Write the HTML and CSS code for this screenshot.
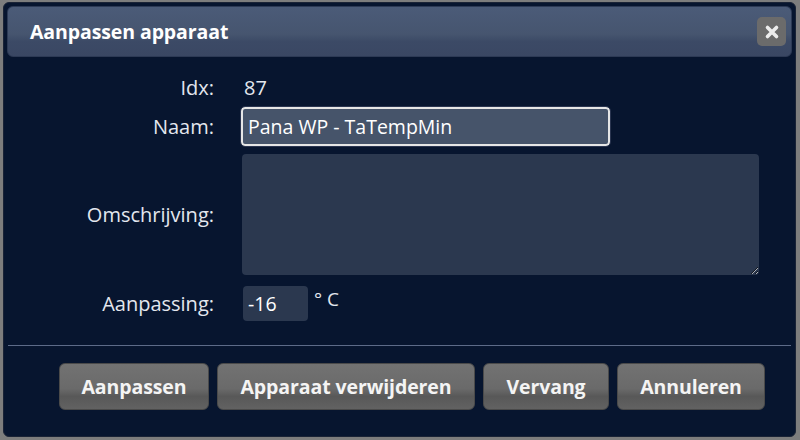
FILE: index.html
```html
<!DOCTYPE html>
<html lang="nl">
<head>
<meta charset="utf-8">
<title>Aanpassen apparaat</title>
<link rel="stylesheet" href="styles.css">
</head>
<body>
<div class="dialog">
  <div class="titlebar">
    <span class="title">Aanpassen apparaat</span>
    <button class="close" aria-label="Sluiten">
      <svg width="16" height="16" viewBox="0 0 16 16"><path d="M3.5 3.5 L12.5 12.5 M12.5 3.5 L3.5 12.5" stroke="#ececec" stroke-width="3.6" stroke-linecap="round"/></svg>
    </button>
  </div>
  <div class="content">
    <div class="form">
      <label class="lbl row-idx">Idx:</label>
      <div class="val row-idx">87</div>
      <label class="lbl">Naam:</label>
      <div class="val"><input class="name" type="text" value="Pana WP - TaTempMin"></div>
      <label class="lbl">Omschrijving:</label>
      <div class="val"><textarea class="desc"></textarea></div>
      <label class="lbl">Aanpassing:</label>
      <div class="val adj"><input class="num" type="text" value="-16"><span class="unit">° C</span></div>
    </div>
  </div>
  <div class="buttons">
    <button class="btn">Aanpassen</button>
    <button class="btn">Apparaat verwijderen</button>
    <button class="btn">Vervang</button>
    <button class="btn">Annuleren</button>
  </div>
</div>
</body>
</html>
```
FILE: styles.css
```css
html, body {
  margin: 0;
  padding: 0;
  background: #7d7d7d;
  width: 800px;
  height: 440px;
  overflow: hidden;
  font-family: "Open Sans", "Noto Sans", sans-serif;
}
body {
  padding: 2px 4px 3px 3px;
  box-sizing: border-box;
}
.dialog {
  box-sizing: border-box;
  width: 793px;
  height: 435px;
  background: #07152f;
  border: 1px solid #1a2336;
  border-radius: 6px;
  padding: 3px 3px 0 3px;
  display: flex;
  flex-direction: column;
}
.titlebar {
  height: 51px;
  box-sizing: border-box;
  border-radius: 6px;
  background: linear-gradient(#4b5b78 0%, #46556f 55%, #3c4a66 70%, #3a4763 100%);
  border: 1px solid #2d3a55;
  display: flex;
  align-items: center;
  justify-content: space-between;
  padding: 0 5px 0 22px;
}
.title {
  color: #fff;
  font-weight: 700;
  font-size: 19.5px;
  letter-spacing: -0.1px;
}
.close {
  width: 29px;
  height: 29px;
  border: 0;
  border-radius: 5px;
  background: #6b6b6b;
  display: flex;
  align-items: center;
  justify-content: center;
  padding: 0;
}
.content {
  flex: 1;
  border-bottom: 1px solid #5d6b88;
  margin: 0 1px;
}
.form {
  display: grid;
  grid-template-columns: 206px 1fr;
  column-gap: 27px;
  row-gap: 8px;
  padding-top: 20px;
  align-items: center;
  color: #e3e7ee;
  font-size: 20px;
}
.lbl {
  text-align: right;
}
.row-idx {
  height: 22px;
  line-height: 22px;
}
.val.row-idx { padding-left: 3px; }
.name {
  box-sizing: border-box;
  width: 369px;
  height: 39px;
  background: #46546a;
  border: 2px solid #e6e6e6;
  outline: 1px solid #2a3550;
  border-radius: 4px;
  color: #fff;
  font-family: inherit;
  font-size: 19.5px;
  padding: 0 5px;
}
.desc {
  display: block;
  box-sizing: border-box;
  width: 517px;
  height: 121px;
  margin-left: 1px;
  background: #2b384f;
  border: 0;
  border-radius: 4px;
  resize: both;
  color: #fff;
}
.adj {
  display: flex;
  align-items: flex-start;
  padding-top: 3px;
  height: 38px;
}
.num {
  box-sizing: border-box;
  width: 65px;
  height: 35px;
  margin-left: 2px;
  background: #2b384f;
  border: 0;
  border-radius: 4px;
  color: #fff;
  font-family: inherit;
  font-size: 19.5px;
  padding: 0 5px;
}
.unit {
  margin-left: 6px;
  margin-top: 0;
  font-size: 19px;
  color: #e3e7ee;
}
.buttons {
  display: flex;
  gap: 8px;
  padding: 17px 0 0 52px;
  height: 90px;
  box-sizing: border-box;
}
.btn {
  height: 47px;
  border: 1px solid #4a4a4a;
  border-radius: 6px;
  background: linear-gradient(#727272 0%, #6a6a6a 55%, #585858 72%, #626262 100%);
  color: #f4f4f4;
  font-family: inherit;
  font-weight: 700;
  font-size: 19.5px;
  letter-spacing: -0.1px;
  padding: 0 8px;
}
.btn:nth-child(1) { width: 150px; }
.btn:nth-child(2) { width: 258px; }
.btn:nth-child(3) { width: 126px; }
.btn:nth-child(4) { width: 148px; }
```
